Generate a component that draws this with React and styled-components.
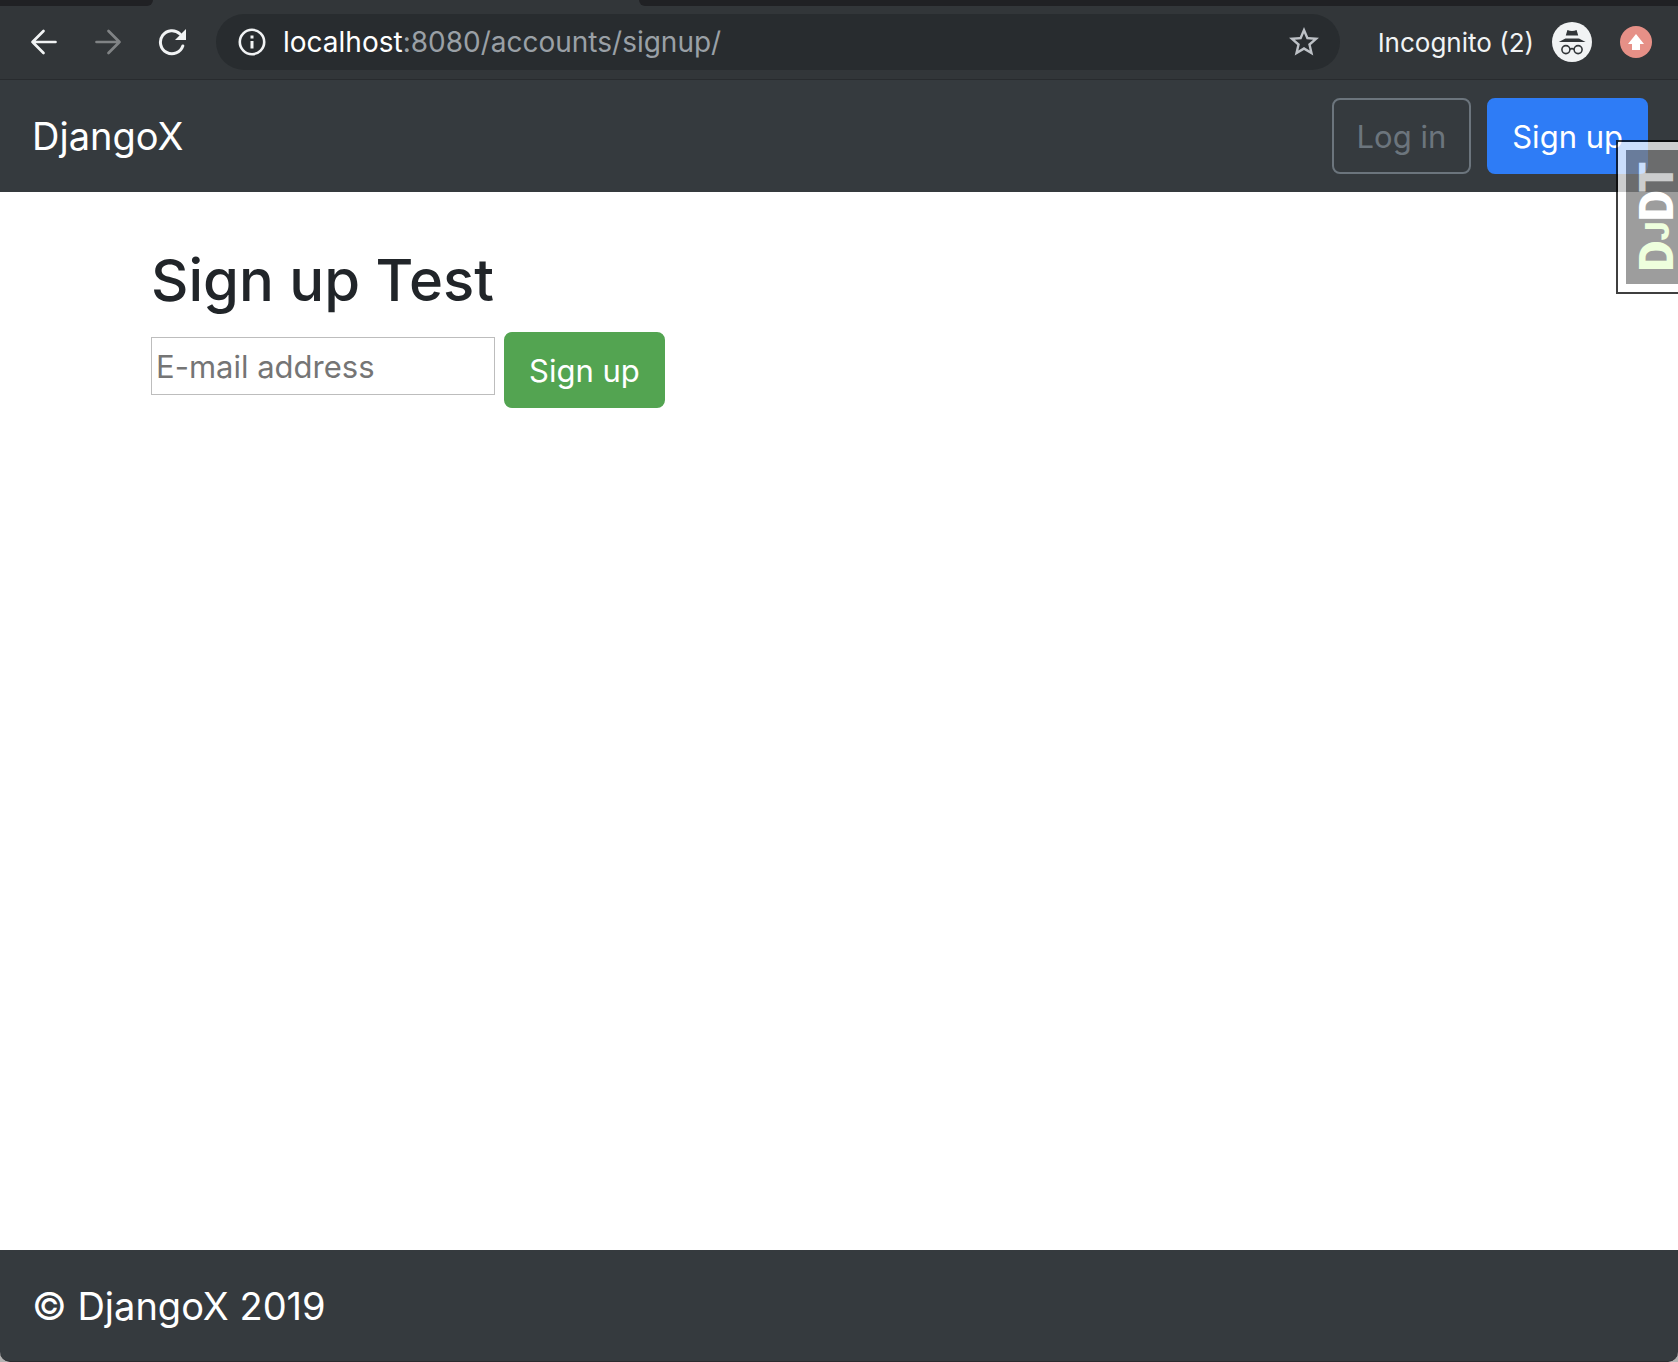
import React from "react";
import styled, { createGlobalStyle } from "styled-components";

const GlobalStyle = createGlobalStyle`
  *, *::before, *::after { box-sizing: border-box; }
  body {
    margin: 0;
    background: #b4b3b3;
    font-family: Inter, "Liberation Sans", sans-serif;
  }
`;

const Window = styled.div`
  position: relative;
  display: flex;
  flex-direction: column;
  min-height: 100vh;
  background: #fff;
  border-radius: 0 0 10px 10px;
`;

const TabStrip = styled.div`
  display: flex;
  height: 6px;
  background: #323639;
`;

const InactiveTabs = styled.div`
  width: ${(p) => p.$width || "auto"};
  flex: ${(p) => (p.$width ? "none" : 1)};
  background: #202124;
  border-radius: ${(p) => (p.$width ? "0 0 14px 0" : "0 0 0 14px")};
`;

const ActiveTab = styled.div`
  width: 486px;
`;

const Toolbar = styled.header`
  display: flex;
  align-items: center;
  height: 74px;
  padding: 0 26px 2px 30px;
  background: #323639;
  border-bottom: 1px solid #282b2e;
`;

const HistoryButtons = styled.div`
  display: flex;
  gap: 36px;
  margin-right: 30px;
`;

const IconButton = styled.button`
  display: flex;
  padding: 0;
  border: 0;
  background: none;
  color: ${(p) => p.$color || "#f1f3f4"};
`;

const AddressBar = styled.div`
  display: flex;
  flex: 1;
  align-items: center;
  height: 56px;
  padding: 0 18px 0 22px;
  border-radius: 28px;
  background: #282c2f;
`;

const Address = styled.div`
  flex: 1;
  margin-left: 17px;
  font-size: 28px;
  line-height: 36px;
  color: #9aa0a6;
`;

const Host = styled.span`
  color: #fff;
`;

const Profile = styled.div`
  display: flex;
  align-items: center;
  gap: 18px;
  margin: 0 28px 0 38px;
  color: #f1f3f4;
  font-size: 26px;
  line-height: 36px;
`;

const ProfileName = styled.span`
  padding-top: 2px;
`;

const Navbar = styled.nav`
  display: flex;
  align-items: center;
  justify-content: space-between;
  height: 112px;
  padding: 0 30px 0 32px;
  background: #353a3e;
`;

const Brand = styled.a`
  color: #fff;
  font-size: 38px;
  line-height: 60px;
  text-decoration: none;
`;

const NavActions = styled.div`
  display: flex;
  gap: 16px;
`;

const buttonColors = {
  primary: ["#2e7cf6", "#2e7cf6", "#fff"],
  success: ["#53a451", "#53a451", "#fff"],
  outline: ["transparent", "#6c757d", "#6c757d"],
};

const Button = styled.button`
  height: 76px;
  padding: 2px 23px 0;
  border: 2px solid ${(p) => buttonColors[p.$kind][1]};
  border-radius: 8px;
  background: ${(p) => buttonColors[p.$kind][0]};
  color: ${(p) => buttonColors[p.$kind][2]};
  font-family: inherit;
  font-size: 31px;
  line-height: 48px;
  white-space: nowrap;
`;

const Main = styled.main`
  flex: 1;
  width: 100%;
  max-width: 1438px;
  margin: 0 auto;
  padding: 48px 31px;
`;

const Title = styled.h1`
  margin: 0 0 12px;
  color: #212529;
  font-size: 58px;
  font-weight: 500;
  line-height: 80px;
`;

const SignupForm = styled.form`
  display: flex;
  align-items: flex-start;
  gap: 9px;
`;

const EmailInput = styled.input`
  width: 344px;
  height: 58px;
  margin: 5px 0 0;
  padding: 0 4px;
  border: 1px solid #bdbdbd;
  border-radius: 0;
  outline: 0;
  background: #fff;
  color: #212529;
  font-family: inherit;
  font-size: 31px;
  line-height: 48px;

  &::placeholder { color: #757575; opacity: 1; }
`;

const Footer = styled.footer`
  display: flex;
  align-items: center;
  height: 112px;
  padding: 0 32px;
  background: #353a3e;
  border-bottom: 1px solid #2b2b2f;
  border-radius: 0 0 10px 10px;
  color: #fff;
  font-size: 38px;
  line-height: 60px;
`;

const DebugHandle = styled.a`
  position: absolute;
  top: 140px;
  right: 0;
  width: 62px;
  height: 154px;
  padding: 8px 0 8px 8px;
  border: 2px solid #000;
  border-right: 0;
  background: #fff;
  opacity: 0.75;
  text-decoration: none;
`;

const DebugLabel = styled.span`
  display: flex;
  align-items: center;
  justify-content: flex-end;
  width: 100%;
  height: 100%;
  background: #7d7d7d;
  color: #fff;
  font-family: Roboto, sans-serif;
  font-size: 48px;
  font-weight: 900;
  line-height: 42px;
`;

const Sideways = styled.span`
  writing-mode: vertical-rl;
  transform: rotate(180deg);
`;

const Accent = styled.span`
  color: #e9ffd2;
`;

const SmallCap = styled.span`
  font-size: 34px;
`;

const Arrow = ({ flip }) => (
  <svg width="28" height="28" viewBox="0 0 28 28" fill="none" stroke="currentColor" strokeWidth="2.7" strokeLinecap="round" strokeLinejoin="round">
    <path d={flip ? "M2.5 14H25.5M14.5 3L25.5 14L14.5 25" : "M25.5 14H2.5M13.5 3L2.5 14L13.5 25"} />
  </svg>
);

const Reload = () => (
  <svg width="28" height="28" viewBox="0 0 28 28">
    <path d="M22 6A11.5 11.5 0 1 0 24.8 18" fill="none" stroke="currentColor" strokeWidth="3" strokeLinecap="round" />
    <path d="M28 1V12H17Z" fill="currentColor" />
  </svg>
);

const Info = () => (
  <svg width="28" height="28" viewBox="0 0 28 28" fill="none" stroke="currentColor">
    <circle cx="14" cy="14" r="12.2" strokeWidth="2.6" />
    <path d="M14 13V20.5M14 7.5V10.5" strokeWidth="3" />
  </svg>
);

const Star = () => (
  <svg width="36" height="36" viewBox="0 0 24 24" fill="currentColor">
    <path d="M22 9.24l-7.19-.62L12 2 9.19 8.63 2 9.24l5.46 4.73L5.82 21 12 17.27 18.18 21l-1.63-7.03L22 9.24zM12 15.4l-3.76 2.27 1-4.28-3.32-2.88 4.38-.38L12 6.1l1.71 4.04 4.38.38-3.32 2.88 1 4.28L12 15.4z" />
  </svg>
);

const Incognito = () => (
  <svg width="40" height="40" viewBox="0 0 40 40">
    <circle cx="20" cy="20" r="20" fill="#f1f3f4" />
    <path d="M15.4 8Q20 10 24.6 8L26.2 13.4H13.8Z" fill="#323639" />
    <path d="M13.4 16.6H27L33.6 20H6.8Z" fill="#323639" />
    <g fill="none" stroke="#323639" strokeWidth="1.6">
      <circle cx="13.9" cy="27.6" r="4" />
      <circle cx="26.1" cy="27.6" r="4" />
      <path d="M17.8 27.4Q20 25.8 22.2 27.4" />
    </g>
  </svg>
);

const Update = () => (
  <svg width="32" height="32" viewBox="0 0 32 32">
    <circle cx="16" cy="16" r="16" fill="#e69087" />
    <path d="M16 8L24 18H20V24H12V18H8Z" fill="#fff" />
  </svg>
);

export default function App() {
  return (
    <>
      <GlobalStyle />
      <Window>
        <TabStrip>
          <InactiveTabs $width="153px" />
          <ActiveTab />
          <InactiveTabs />
        </TabStrip>
        <Toolbar>
          <HistoryButtons>
            <IconButton aria-label="Back"><Arrow /></IconButton>
            <IconButton aria-label="Forward" $color="#808385"><Arrow flip /></IconButton>
            <IconButton aria-label="Reload"><Reload /></IconButton>
          </HistoryButtons>
          <AddressBar>
            <IconButton aria-label="Site information"><Info /></IconButton>
            <Address><Host>localhost</Host>:8080/accounts/signup/</Address>
            <IconButton aria-label="Bookmark" $color="#bdc1c6"><Star /></IconButton>
          </AddressBar>
          <Profile>
            <ProfileName>Incognito (2)</ProfileName>
            <Incognito />
          </Profile>
          <IconButton aria-label="Update"><Update /></IconButton>
        </Toolbar>
        <Navbar>
          <Brand href="#">DjangoX</Brand>
          <NavActions>
            <Button $kind="outline">Log in</Button>
            <Button $kind="primary">Sign up</Button>
          </NavActions>
        </Navbar>
        <Main>
          <Title>Sign up Test</Title>
          <SignupForm onSubmit={(e) => e.preventDefault()}>
            <EmailInput type="email" aria-label="E-mail address" placeholder="E-mail address" />
            <Button $kind="success" type="submit">Sign up</Button>
          </SignupForm>
        </Main>
        <Footer>© DjangoX 2019</Footer>
        <DebugHandle href="#">
          <DebugLabel>
            <Sideways><Accent>D<SmallCap>J</SmallCap></Accent>DT</Sideways>
          </DebugLabel>
        </DebugHandle>
      </Window>
    </>
  );
}
